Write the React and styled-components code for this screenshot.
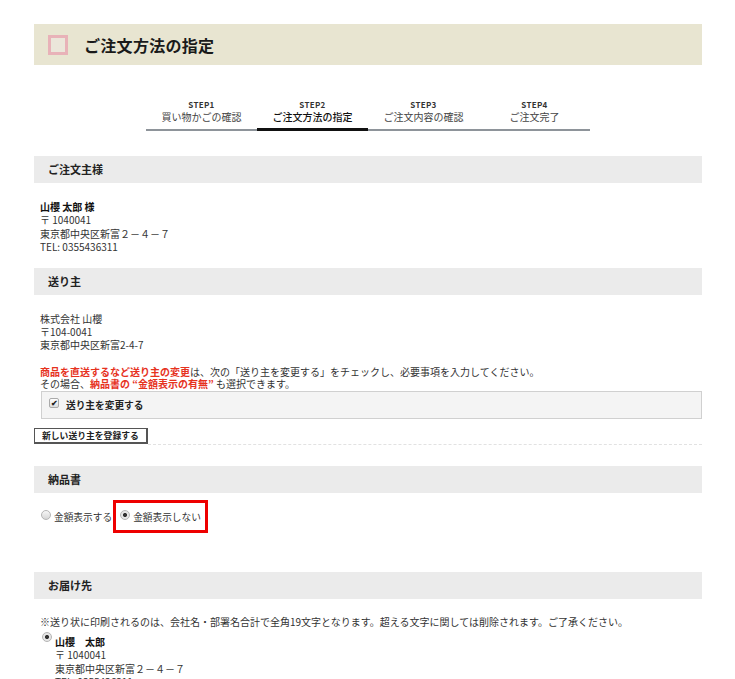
import React from "react";
import styled, { createGlobalStyle } from "styled-components";

const GlobalStyle = createGlobalStyle`
  html, body {
    margin: 0;
    padding: 0;
    background: #fff;
  }
  body {
    font-family: "Noto Sans CJK JP", "Noto Sans", sans-serif;
    color: #222;
  }
`;

const Page = styled.div`
  width: 668px;
  margin-left: 34px;
  padding-top: 24px;
`;

const TitleBand = styled.div`
  height: 41px;
  background: #e8e5d1;
  display: flex;
  align-items: center;
  padding-left: 14px;
  gap: 16px;
`;

const TitleMark = styled.span`
  width: 14px;
  height: 14px;
  border: 3px solid #e8b2b8;
  background: #ebe6da;
  flex: none;
`;

const Title = styled.h1`
  margin: 0;
  font-size: 16px;
  font-weight: 700;
  color: #1a1a1a;
  letter-spacing: 0.3px;
`;

const Steps = styled.ol`
  list-style: none;
  margin: 34px auto 0;
  padding: 0;
  width: 444px;
  display: grid;
  grid-template-columns: repeat(4, 1fr);
  border-bottom: 2px solid #8e949a;
`;

const Step = styled.li`
  text-align: center;
  padding-bottom: 5px;
  margin-bottom: -2px;
  border-bottom: 3px solid ${(p) => (p.$active ? "#111" : "transparent")};
  color: #333;
`;

const StepNum = styled.div`
  font-size: 8px;
  font-weight: 700;
  line-height: 11px;
  letter-spacing: 0.3px;
`;

const StepName = styled.div`
  font-size: 10px;
  line-height: 13px;
  color: ${(p) => (p.$active ? "#111" : "#444")};
  font-weight: ${(p) => (p.$active ? 500 : 400)};
`;

const SectionHead = styled.h2`
  margin: ${(p) => p.$top || 24}px 0 0;
  height: 27px;
  background: #ebebeb;
  font-size: 11px;
  font-weight: 700;
  line-height: 27px;
  padding-left: 14px;
  color: #222;
`;

const Body = styled.div`
  padding: 17px 0 0 6px;
  font-size: 10px;
  line-height: 13.4px;
  color: #333;
`;

const Strong = styled.div`
  font-weight: 700;
  color: #111;
`;

const Notice = styled.div`
  margin-top: 14px;
  font-size: 10px;
  line-height: 12.6px;
  color: #333;
`;

const Red = styled.span`
  color: #e6321e;
  font-weight: 700;
`;

const CheckPanel = styled.label`
  display: flex;
  align-items: center;
  gap: 7px;
  margin: 0 0 0 7px;
  height: 26px;
  padding-left: 7px;
  background: #f4f4f4;
  border: 1px solid #d0d0d0;
  font-size: 9.7px;
  font-weight: 700;
  color: #222;
`;

const Check = styled.span`
  width: 8px;
  height: 8px;
  border: 1px solid #aaa;
  border-radius: 2px;
  background: linear-gradient(#fff, #ddd);
  display: flex;
  align-items: center;
  justify-content: center;
  font-size: 8px;
  line-height: 1;
  color: #222;
  margin-top: -4px;
`;

const ButtonRow = styled.div`
  display: flex;
  align-items: flex-end;
  margin-top: 9px;
`;

const Button = styled.button`
  height: 16px;
  padding: 0 7px;
  font-family: inherit;
  font-size: 8.8px;
  font-weight: 700;
  color: #222;
  background: #fff;
  border: 1px solid #555;
  border-right-width: 2px;
  border-bottom-width: 2px;
  line-height: 12px;
  flex: none;
`;

const Dotted = styled.div`
  flex: 1;
  border-bottom: 1px dashed #e2e2e2;
  margin-bottom: -1px;
`;

const RadioRow = styled.div`
  display: flex;
  align-items: center;
  margin-top: 7px;
  padding-left: 6px;
  font-size: 9.7px;
  color: #333;
`;

const RadioOption = styled.label`
  display: flex;
  align-items: center;
  gap: 3px;
  height: 27px;
  padding: 0 ${(p) => (p.$framed ? "4px" : "1px")};
  border: 3px solid ${(p) => (p.$framed ? "#ee0000" : "transparent")};
  margin-left: -3px;
`;

const Radio = styled.span`
  width: 8px;
  height: 8px;
  border-radius: 50%;
  border: 1px solid #b5b5b5;
  background: ${(p) =>
    p.$on
      ? "radial-gradient(circle, #333 0 1.8px, #e6e6e6 2.3px)"
      : "linear-gradient(#f7f7f7, #d6d6d6)"};
  flex: none;
  margin-top: -3px;
`;

const Note = styled.p`
  margin: 15px 0 0;
  padding-left: 6px;
  font-size: 10px;
  color: #333;
`;

const Addressee = styled.div`
  display: flex;
  gap: 3px;
  margin-top: 6px;
  padding-left: 8px;
  font-size: 10px;
  line-height: 13.4px;
  color: #333;
`;

const AddressLines = styled.div`
  display: flex;
  flex-direction: column;
`;

const steps = [
  ["STEP1", "買い物かごの確認"],
  ["STEP2", "ご注文方法の指定"],
  ["STEP3", "ご注文内容の確認"],
  ["STEP4", "ご注文完了"],
];

export default function App() {
  return (
    <Page>
      <GlobalStyle />
      <TitleBand>
        <TitleMark />
        <Title>ご注文方法の指定</Title>
      </TitleBand>

      <Steps>
        {steps.map(([num, name], i) => (
          <Step key={num} $active={i === 1}>
            <StepNum>{num}</StepNum>
            <StepName $active={i === 1}>{name}</StepName>
          </Step>
        ))}
      </Steps>

      <SectionHead $top={25}>ご注文主様</SectionHead>
      <Body>
        <Strong>山櫻 太郎 様</Strong>
        <div>〒 1040041</div>
        <div>東京都中央区新富２－４－７</div>
        <div>TEL: 0355436311</div>
      </Body>

      <SectionHead $top={14}>送り主</SectionHead>
      <Body>
        <div>株式会社 山櫻</div>
        <div>〒104-0041</div>
        <div>東京都中央区新富2-4-7</div>
        <Notice>
          <div>
            <Red>商品を直送するなど送り主の変更</Red>は、次の「送り主を変更する」をチェックし、必要事項を入力してください。
          </div>
          <div>
            その場合、<Red>納品書の “金額表示の有無” </Red>も選択できます。
          </div>
        </Notice>
      </Body>
      <CheckPanel>
        <Check>✔</Check>
        送り主を変更する
      </CheckPanel>
      <ButtonRow>
        <Button>新しい送り主を登録する</Button>
        <Dotted />
      </ButtonRow>

      <SectionHead $top={22}>納品書</SectionHead>
      <RadioRow>
        <RadioOption>
          <Radio />
          金額表示する
        </RadioOption>
        <RadioOption $framed>
          <Radio $on />
          金額表示しない
        </RadioOption>
      </RadioRow>

      <SectionHead $top={39}>お届け先</SectionHead>
      <Note>
        ※送り状に印刷されるのは、会社名・部署名合計で全角19文字となります。超える文字に関しては削除されます。ご了承ください。
      </Note>
      <Addressee>
        <Radio $on />
        <AddressLines>
          <Strong>山櫻　太郎</Strong>
          <div>〒 1040041</div>
          <div>東京都中央区新富２－４－７</div>
          <div>TEL: 0355436311</div>
        </AddressLines>
      </Addressee>
    </Page>
  );
}
